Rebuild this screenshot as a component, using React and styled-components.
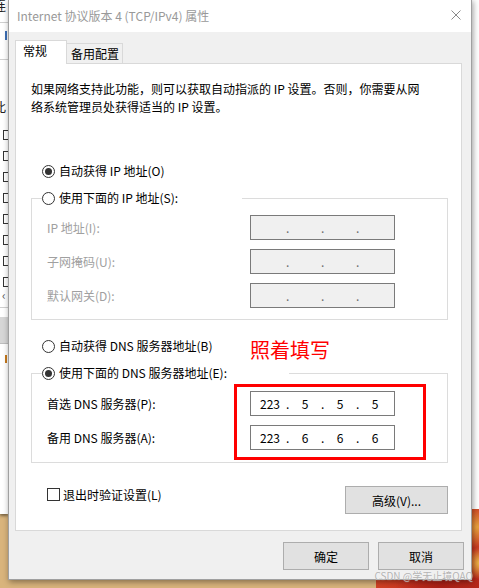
import styled, { createGlobalStyle } from "styled-components";

const GlobalStyle = createGlobalStyle`
  html, body {
    margin: 0;
    padding: 0;
  }
  body {
    font-family: "Noto Sans CJK SC", "Noto Sans", sans-serif;
    font-size: 12px;
    color: #000;
    overflow: hidden;
  }
`;

const Desktop = styled.div`
  position: relative;
  width: 479px;
  height: 588px;
  overflow: hidden;
  background: #d9b47c;
`;

/* bits of the windows behind the dialog */
const BackWindow = styled.div`
  position: absolute;
  left: 0;
  top: 0;
  width: 8px;
  height: 514px;
  background: #fff;
  overflow: hidden;
  display: flex;
  flex-direction: column;
  box-shadow: 0 2px 3px rgba(0, 0, 0, 0.45);
`;

const BackGlyph = styled.div`
  margin: ${({ $top }) => $top}px 0 0 -7px;
  font-size: 13px;
  line-height: 13px;
  color: #222;
  white-space: nowrap;
`;

const BackLine = styled.div`
  margin-top: ${({ $top }) => $top}px;
  height: 1px;
  background: #cfcfcf;
`;

const BackMark = styled.div`
  margin: ${({ $top }) => $top}px 0 0 5px;
  width: 2px;
  height: ${({ $h }) => $h}px;
  background: ${({ $color }) => $color};
`;

const BackChecks = styled.div`
  margin: 17px 0 0 3px;
  display: flex;
  flex-direction: column;
  gap: 11px;
`;

const BackCheck = styled.div`
  width: 10px;
  height: 10px;
  box-sizing: border-box;
  border: 1px solid #333;
  background: #fff;
`;

const BackChevron = styled.div`
  margin: 3px 0 0 2px;
  font-size: 12px;
  line-height: 10px;
  color: #555;
`;

const BackBlock = styled.div`
  margin-top: 9px;
  height: 26px;
  background: #d6d6d6;
  border-bottom: 1px solid #bdbdbd;
`;

const RightWindow = styled.div`
  position: absolute;
  left: 470px;
  top: 0;
  width: 20px;
  height: 509px;
  background: #fff;
`;

const Photo = styled.div`
  position: absolute;
  left: 376px;
  top: 509px;
  width: 110px;
  height: 90px;
  background: radial-gradient(circle at 92% 20%, #e9a33c 0, transparent 18%),
    radial-gradient(circle at 95% 60%, #f0c24a 0, transparent 14%),
    radial-gradient(circle at 60% 90%, #a81e16 0, transparent 45%),
    linear-gradient(135deg, #e4602d, #c9321f 60%, #b3261a);
`;

/* the dialog */
const Dialog = styled.div`
  position: absolute;
  left: 8px;
  top: -1px;
  width: 464px;
  height: 581px;
  box-sizing: border-box;
  border: 1px solid #a0a0a0;
  background: #f0f0f0;
  box-shadow: 1px 2px 6px rgba(0, 0, 0, 0.4);
  display: flex;
  flex-direction: column;
`;

const TitleBar = styled.div`
  height: 32px;
  flex: none;
  background: #fff;
  display: flex;
  align-items: center;
  padding: 0 10px 0 8px;
`;

const Title = styled.div`
  flex: 1;
  color: #999;
  line-height: 16px;
  white-space: nowrap;
`;

const CloseIcon = styled.svg`
  width: 10px;
  height: 10px;
  margin-top: -2px;
`;

const Body = styled.div`
  flex: 1;
  display: flex;
  flex-direction: column;
  padding: 8px 9px 0 6px;
`;

const TabRow = styled.div`
  display: flex;
  align-items: flex-end;
  position: relative;
  z-index: 1;
  margin-bottom: -1px;
`;

const Tab = styled.div`
  box-sizing: border-box;
  width: ${({ $active }) => ($active ? 52 : 56)}px;
  height: ${({ $active }) => ($active ? 24 : 20)}px;
  margin-bottom: ${({ $active }) => ($active ? 0 : 1)}px;
  padding-left: ${({ $active }) => ($active ? 7 : 4)}px;
  line-height: ${({ $active }) => ($active ? 20 : 19)}px;
  background: ${({ $active }) => ($active ? "#fff" : "#f0f0f0")};
  border: 1px solid #d9d9d9;
  border-bottom: none;
  border-left: ${({ $active }) => ($active ? "1px solid #d9d9d9" : "none")};
  white-space: nowrap;
`;

const Panel = styled.div`
  height: 468px;
  box-sizing: border-box;
  background: #fff;
  border: 1px solid #d9d9d9;
  padding: 16px 13px 0 15px;
  display: flex;
  flex-direction: column;
`;

const Intro = styled.p`
  margin: 0;
  line-height: 18px;
  white-space: nowrap;
`;

const RadioRow = styled.div`
  position: relative;
  margin-top: ${({ $top }) => $top}px;
  height: 18px;
  padding-left: 11px;
  display: flex;
  align-items: center;
`;

const RadioLabel = styled.label`
  display: inline-flex;
  align-items: center;
  gap: 4px;
  line-height: 18px;
  white-space: nowrap;
`;

const RadioCircle = styled.span`
  width: 13px;
  height: 13px;
  box-sizing: border-box;
  border: 1px solid #333;
  border-radius: 50%;
  background: #fff;
  display: grid;
  place-items: center;
`;

const RadioDot = styled.span`
  width: 7px;
  height: 7px;
  border-radius: 50%;
  background: #333;
`;

const Note = styled.div`
  position: absolute;
  left: 219px;
  top: 3px;
  font-size: 20px;
  line-height: 20px;
  color: #ff0000;
  white-space: nowrap;
`;

const Group = styled.fieldset`
  margin: 9px 0 0;
  padding: 0;
  min-width: 0;
  border: 1px solid #dcdcdc;
`;

const Legend = styled.legend`
  box-sizing: border-box;
  width: ${({ $w }) => $w}px;
  height: 18px;
  margin-left: 10px;
  padding: 0;
  display: flex;
  align-items: center;
`;

const RowList = styled.div`
  position: relative;
  display: flex;
  flex-direction: column;
  gap: 9px;
  padding: ${({ $top }) => $top}px 0 ${({ $bottom }) => $bottom}px 15px;
`;

const FieldRow = styled.div`
  display: grid;
  grid-template-columns: 203px 145px;
  align-items: center;
`;

const FieldLabel = styled.span`
  color: ${({ $disabled }) => ($disabled ? "#a0a0a0" : "#000")};
  white-space: nowrap;
`;

const IpBox = styled.div`
  height: 25px;
  box-sizing: border-box;
  border: 1px solid #7a7a7a;
  background: ${({ $disabled }) => ($disabled ? "#f0f0f0" : "#fff")};
  color: ${({ $disabled }) => ($disabled ? "#6d6d6d" : "#000")};
  padding-left: 3px;
  display: flex;
  align-items: center;
  line-height: 16px;
`;

const Octet = styled.span`
  width: 32px;
  text-align: center;
`;

const OctetDot = styled.span`
  width: 3px;
  text-align: center;
`;

const Highlight = styled.div`
  position: absolute;
  left: 202px;
  top: 2px;
  width: 192px;
  height: 76px;
  box-sizing: border-box;
  border: 3px solid #ff0000;
  pointer-events: none;
`;

const PanelFooter = styled.div`
  margin-top: 23px;
  padding-left: 16px;
  display: flex;
  align-items: flex-start;
  justify-content: space-between;
`;

const CheckLabel = styled.label`
  margin-top: 2px;
  display: inline-flex;
  align-items: center;
  gap: 3px;
  line-height: 13px;
  white-space: nowrap;
`;

const CheckBox = styled.span`
  width: 13px;
  height: 13px;
  box-sizing: border-box;
  border: 1px solid #333;
  background: #fff;
`;

const Button = styled.button`
  width: ${({ $w }) => $w}px;
  height: 28px;
  box-sizing: border-box;
  border: 1px solid #adadad;
  background: #e1e1e1;
  font-family: inherit;
  font-size: 12px;
  color: #000;
  padding: 0;
`;

const ButtonRow = styled.div`
  margin: 11px -2px 0 0;
  display: flex;
  justify-content: flex-end;
  gap: 9px;
`;

const Watermark = styled.div`
  position: absolute;
  right: 6px;
  bottom: 6px;
  font-size: 10px;
  line-height: 12px;
  color: rgba(170, 170, 170, 0.9);
  text-shadow: 0 0 1px rgba(255, 255, 255, 0.8);
  white-space: nowrap;
`;

const Radio = ({ checked, children }) => (
  <RadioLabel>
    <RadioCircle>{checked && <RadioDot />}</RadioCircle>
    {children}
  </RadioLabel>
);

const IpField = ({ value, disabled }) => {
  const parts = value ? value.split(".") : ["", "", "", ""];
  return (
    <IpBox $disabled={disabled}>
      {parts.map((p, i) => [
        <Octet key={"o" + i}>{p}</Octet>,
        i < 3 && <OctetDot key={"d" + i}>.</OctetDot>,
      ])}
    </IpBox>
  );
};

const ipRows = ["IP 地址(I):", "子网掩码(U):", "默认网关(D):"];
const dnsRows = [
  { label: "首选 DNS 服务器(P):", value: "223.5.5.5" },
  { label: "备用 DNS 服务器(A):", value: "223.6.6.6" },
];

export default function App() {
  return (
    <>
      <GlobalStyle />
      <Desktop>
        <BackWindow>
          <BackGlyph $top={-2}>连</BackGlyph>
          <BackLine $top={11} />
          <BackMark $top={8} $h={9} $color="#3d6fb6" />
          <BackLine $top={19} />
          <BackGlyph $top={40}>此</BackGlyph>
          <BackChecks>
            {[0, 1, 2, 3, 4, 5, 6, 7].map((i) => (
              <BackCheck key={i} />
            ))}
          </BackChecks>
          <BackChevron>‹</BackChevron>
          <BackLine $top={7} />
          <BackBlock />
          <BackMark $top={11} $h={8} $color="#c77a1c" />
        </BackWindow>
        <RightWindow />
        <Photo />

        <Dialog>
          <TitleBar>
            <Title>Internet 协议版本 4 (TCP/IPv4) 属性</Title>
            <CloseIcon viewBox="0 0 10 10">
              <path d="M0.5 0.5 L9.5 9.5 M9.5 0.5 L0.5 9.5" stroke="#8a8a8a" strokeWidth="1" fill="none" />
            </CloseIcon>
          </TitleBar>

          <Body>
            <TabRow>
              <Tab $active>常规</Tab>
              <Tab>备用配置</Tab>
            </TabRow>

            <Panel>
              <Intro>
                如果网络支持此功能，则可以获取自动指派的 IP 设置。否则，你需要从网
                <br />
                络系统管理员处获得适当的 IP 设置。
              </Intro>

              <RadioRow $top={46}>
                <Radio checked>自动获得 IP 地址(O)</Radio>
              </RadioRow>

              <Group>
                <Legend $w={200}>
                  <Radio>使用下面的 IP 地址(S):</Radio>
                </Legend>
                <RowList $top={8} $bottom={11}>
                  {ipRows.map((label) => (
                    <FieldRow key={label}>
                      <FieldLabel $disabled>{label}</FieldLabel>
                      <IpField disabled />
                    </FieldRow>
                  ))}
                </RowList>
              </Group>

              <RadioRow $top={17}>
                <Radio>自动获得 DNS 服务器地址(B)</Radio>
                <Note>照着填写</Note>
              </RadioRow>

              <Group>
                <Legend $w={247}>
                  <Radio checked>使用下面的 DNS 服务器地址(E):</Radio>
                </Legend>
                <RowList $top={9} $bottom={12}>
                  {dnsRows.map((row) => (
                    <FieldRow key={row.label}>
                      <FieldLabel>{row.label}</FieldLabel>
                      <IpField value={row.value} />
                    </FieldRow>
                  ))}
                  <Highlight />
                </RowList>
              </Group>

              <PanelFooter>
                <CheckLabel>
                  <CheckBox />
                  退出时验证设置(L)
                </CheckLabel>
                <Button $w={103}>高级(V)...</Button>
              </PanelFooter>
            </Panel>

            <ButtonRow>
              <Button $w={86}>确定</Button>
              <Button $w={86}>取消</Button>
            </ButtonRow>
          </Body>
        </Dialog>

        <Watermark>CSDN @学无止境QAQ</Watermark>
      </Desktop>
    </>
  );
}
